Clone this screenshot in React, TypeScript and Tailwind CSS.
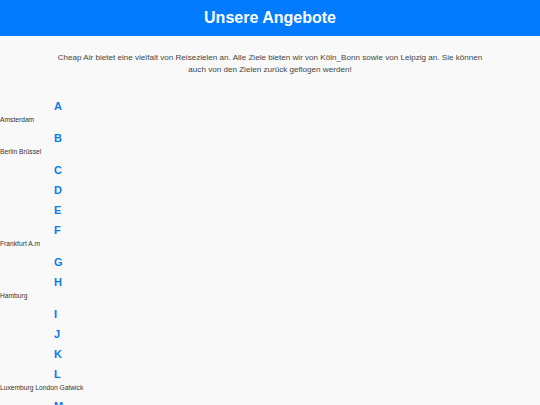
const groups: { letter: string; cities?: string }[] = [
  { letter: "A", cities: "Amsterdam" },
  { letter: "B", cities: "Berlin Brüssel" },
  { letter: "C" },
  { letter: "D" },
  { letter: "E" },
  { letter: "F", cities: "Frankfurt A.m" },
  { letter: "G" },
  { letter: "H", cities: "Hamburg" },
  { letter: "I" },
  { letter: "J" },
  { letter: "K" },
  { letter: "L", cities: "Luxemburg London Gatwick" },
  { letter: "M" },
  { letter: "N" },
];

export default function App() {
  return (
    <div className="min-h-screen bg-[#f9f9f9] font-['Liberation_Sans',Arial,sans-serif]">
      <header className="h-[36px] bg-[#007bff] flex items-center justify-center">
        <h1 className="text-white text-[16px] font-bold leading-none">Unsere Angebote</h1>
      </header>

      <p className="mx-auto mt-[16px] max-w-[434px] text-center text-[8.1px] leading-[12px] text-[#444]">
        Cheap Air bietet eine vielfalt von Reisezielen an. Alle Ziele bieten wir von Köln_Bonn sowie von Leipzig an. Sie können auch von den Zielen zurück geflogen werden!
      </p>

      <ul className="mt-[20px]">
        {groups.map(g => (
          <li key={g.letter}>
            <div className="pl-[54px] h-[20px] leading-[20px] text-[11px] font-bold text-[#0a7be8]">{g.letter}</div>
            {g.cities && (
              <div className="h-[12px] pb-[4px] leading-[8px] text-[6.7px] text-[#333]">{g.cities}</div>
            )}
          </li>
        ))}
      </ul>
    </div>
  );
}
